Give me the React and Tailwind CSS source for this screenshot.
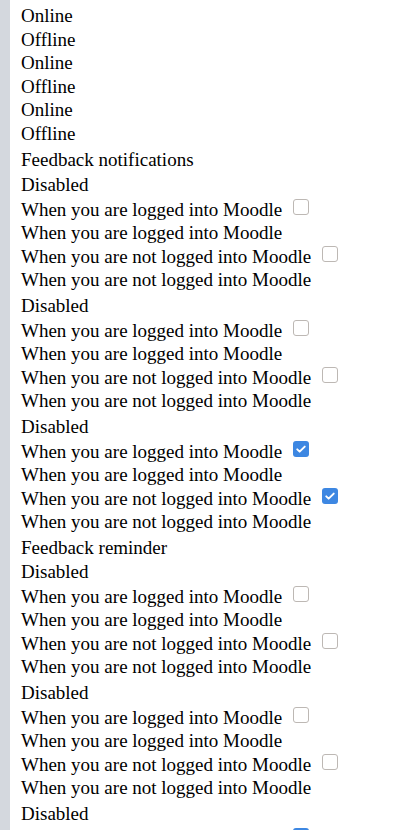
const statuses = ["Online", "Offline", "Online", "Offline", "Online", "Offline"];

const sections = [
  { title: "Feedback notifications", h: "h-[25px]", blocks: [false, false, true] },
  { title: "Feedback reminder", h: "h-[24px]", blocks: [false, false, true] },
];

const Box = ({ checked }) =>
  checked ? (
    <span className="ml-[11px] mt-[1px] flex h-[16px] w-[16px] items-center justify-center rounded-[3px] bg-[#3d87e2]">
      <svg viewBox="0 0 16 16" className="h-[12px] w-[12px]" fill="none" stroke="white" strokeWidth="2.6" strokeLinecap="round" strokeLinejoin="round">
        <path d="M3 8.5l3.2 3L13 4.8" />
      </svg>
    </span>
  ) : (
    <span className="ml-[11px] mt-[1px] h-[16px] w-[16px] rounded-[3px] border border-[#bdb8b4] bg-white" />
  );

function Block({ checked }) {
  return (
    <div>
      <div className="h-[25px]">Disabled</div>
      <div className="flex h-[23px] items-start">
        <span>When you are logged into Moodle</span>
        <Box checked={checked} />
      </div>
      <div className="h-[24px]">When you are logged into Moodle</div>
      <div className="flex h-[23px] items-start">
        <span>When you are not logged into Moodle</span>
        <Box checked={checked} />
      </div>
      <div className="h-[26px]">When you are not logged into Moodle</div>
    </div>
  );
}

export default function App() {
  return (
    <div className="min-h-screen border-l-[10px] border-[#d4d8de] bg-white pl-[11px] pt-[4px] text-[19px] leading-[23.5px] text-black [font-family:'Liberation_Serif',serif]">
      <div className="mb-[2px]">
        {statuses.map((s, i) => (
          <div key={i} className="h-[23.6px]">
            {s}
          </div>
        ))}
      </div>
      {sections.map((sec) => (
        <div key={sec.title}>
          <div className={sec.h}>{sec.title}</div>
          {sec.blocks.map((c, i) => (
            <Block key={i} checked={c} />
          ))}
        </div>
      ))}
    </div>
  );
}
